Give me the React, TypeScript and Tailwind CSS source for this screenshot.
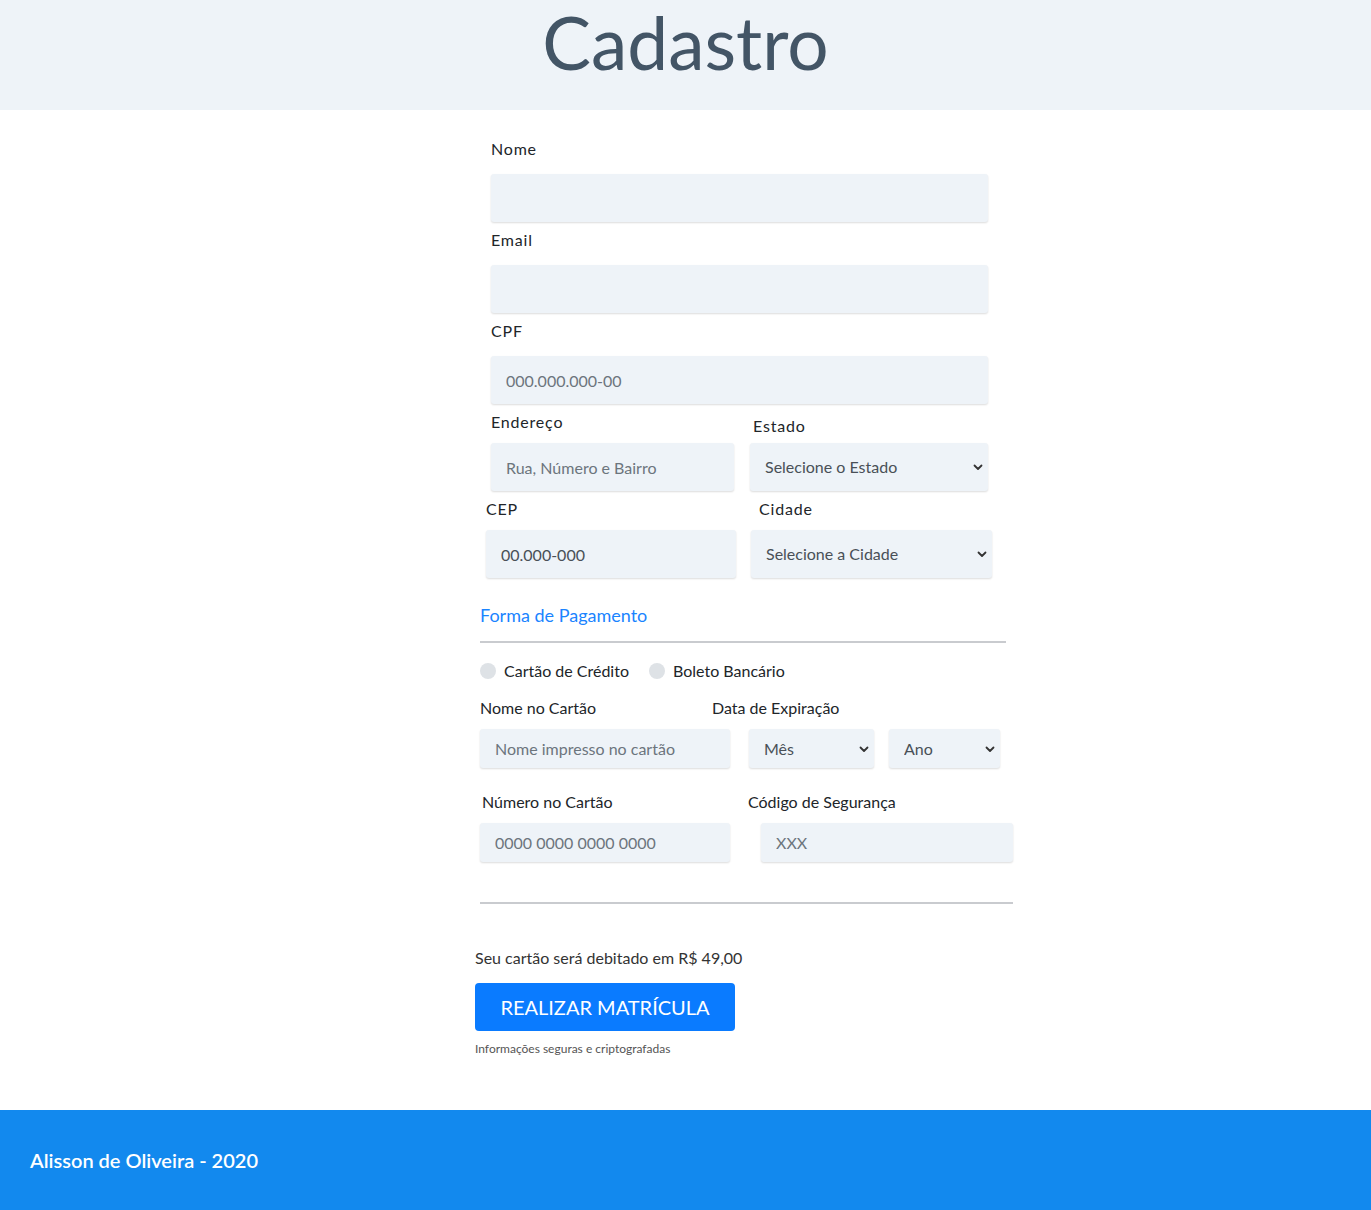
import React from 'react';

const inputCls =
  'w-full rounded-[3px] bg-[#eef3f8] px-[15px] text-[16px] text-[#495057] placeholder:text-[#6c757d] shadow-[0_1px_2px_rgba(0,0,0,0.14)] outline-none';

const Chevron = () => (
  <svg
    width="10"
    height="10"
    viewBox="0 0 10 10"
    className="pointer-events-none absolute right-[5px] top-1/2 -translate-y-1/2"
  >
    <path d="M1.5 3.5 L5 7 L8.5 3.5" fill="none" stroke="#333" strokeWidth="1.8" strokeLinecap="round" strokeLinejoin="round" />
  </svg>
);

const Select = ({ label, className }: { label: string; className: string }) => (
  <div className={`relative shrink-0 ${className}`}>
    <select
      defaultValue=""
      className="h-full w-full appearance-none rounded-[3px] bg-[#eef3f8] pl-[15px] text-[16px] text-[#495057] shadow-[0_1px_2px_rgba(0,0,0,0.14)] outline-none"
    >
      <option value="" disabled>
        {label}
      </option>
    </select>
    <Chevron />
  </div>
);

const Label = ({ children, className = '' }: { children: React.ReactNode; className?: string }) => (
  <label className={`block text-[16px] leading-6 tracking-[0.8px] text-[#212529] ${className}`}>{children}</label>
);

const App = () => {
  return (
    <div className="flex min-h-screen flex-col bg-white font-['Lato','Noto_Sans',sans-serif] text-[#212529]">
      <header className="flex h-[110px] items-start justify-center bg-[#eef3f8]">
        <h1 className="mt-[2px] text-[73px] leading-[80px] text-[#435566]">Cadastro</h1>
      </header>

      <main className="flex-1 pl-[475px] pt-[27px]">
        <form className="w-[560px]" onSubmit={(e) => e.preventDefault()}>
          <div className="pl-[16px] w-[513px]">
            <Label>Nome</Label>
            <input type="text" className={`${inputCls} mt-[13px] h-[48px]`} />
            <Label className="mt-[6px]">Email</Label>
            <input type="email" className={`${inputCls} mt-[13px] h-[48px]`} />
            <Label className="mt-[6px]">CPF</Label>
            <input type="text" placeholder="000.000.000-00" className={`${inputCls} mt-[13px] h-[48px]`} />
          </div>

          <div className="mt-[6px] flex">
            <div className="ml-[16px] w-[243px]">
              <Label className="mb-[9px]">Endereço</Label>
              <input type="text" placeholder="Rua, Número e Bairro" className={`${inputCls} h-[48px]`} />
            </div>
            <div className="ml-[16px] w-[238px]">
              <Label className="mb-[5px] mt-[4px] pl-[3px]">Estado</Label>
              <Select label="Selecione o Estado" className="h-[48px]" />
            </div>
          </div>

          <div className="mt-[6px] flex">
            <div className="ml-[11px] w-[250px]">
              <Label className="mb-[9px]">CEP</Label>
              <input type="text" placeholder="00.000-000" className={`${inputCls} h-[48px] placeholder:text-[#495057]`} />
            </div>
            <div className="ml-[15px] w-[241px]">
              <Label className="mb-[9px] pl-[8px]">Cidade</Label>
              <Select label="Selecione a Cidade" className="h-[48px]" />
            </div>
          </div>

          <div className="pl-[5px]">
            <h2 className="mt-[24px] text-[18px] leading-[26px] text-[#1a84ff]">Forma de Pagamento</h2>
            <hr className="mt-[13px] w-[526px] border-t-2 border-[#c9cbcf]" />

            <div className="mt-[16px] flex items-center text-[16px] leading-6">
              <span className="h-4 w-4 rounded-full bg-[#dee2e6]" />
              <span className="ml-[8px]">Cartão de Crédito</span>
              <span className="ml-[20px] h-4 w-4 rounded-full bg-[#dee2e6]" />
              <span className="ml-[8px]">Boleto Bancário</span>
            </div>

            <div className="mt-[13px] flex text-[16px] leading-6">
              <div className="w-[250px] shrink-0">
                <div>Nome no Cartão</div>
                <input
                  type="text"
                  placeholder="Nome impresso no cartão"
                  className={`${inputCls} mt-[9px] h-[39px]`}
                />
              </div>
              <div className="ml-[-18px] shrink-0">
                <div>Data de Expiração</div>
                <div className="mt-[9px] flex">
                  <Select label="Mês" className="ml-[37px] h-[39px] w-[125px]" />
                  <Select label="Ano" className="ml-[15px] h-[39px] w-[111px]" />
                </div>
              </div>
            </div>

            <div className="mt-[22px] flex text-[16px] leading-6">
              <div className="w-[250px] shrink-0">
                <div className="pl-[2px]">Número no Cartão</div>
                <input
                  type="text"
                  placeholder="0000 0000 0000 0000"
                  className={`${inputCls} mt-[9px] h-[39px]`}
                />
              </div>
              <div className="ml-[18px] shrink-0">
                <div>Código de Segurança</div>
                <input type="text" placeholder="XXX" className={`${inputCls} ml-[13px] mt-[9px] h-[39px] !w-[252px]`} />
              </div>
            </div>

            <hr className="mt-[40px] w-[533px] border-t-2 border-[#c9cbcf]" />
          </div>

          <p className="mt-[42px] text-[16px] leading-6 text-[#333]">Seu cartão será debitado em R$ 49,00</p>
          <button
            type="submit"
            className="mt-[13px] h-[48px] w-[260px] rounded-[4px] bg-[#0a7bff] text-[20px] text-white"
          >
            REALIZAR MATRÍCULA
          </button>
          <p className="mt-[10px] text-[12px] leading-4 text-[#555]">Informações seguras e criptografadas</p>
        </form>
      </main>

      <footer className="flex h-[100px] items-center bg-[#1289ee] pl-[30px]">
        <span className="text-[20px] font-semibold text-white">Alisson de Oliveira - 2020</span>
      </footer>
    </div>
  );
};

export default App;
